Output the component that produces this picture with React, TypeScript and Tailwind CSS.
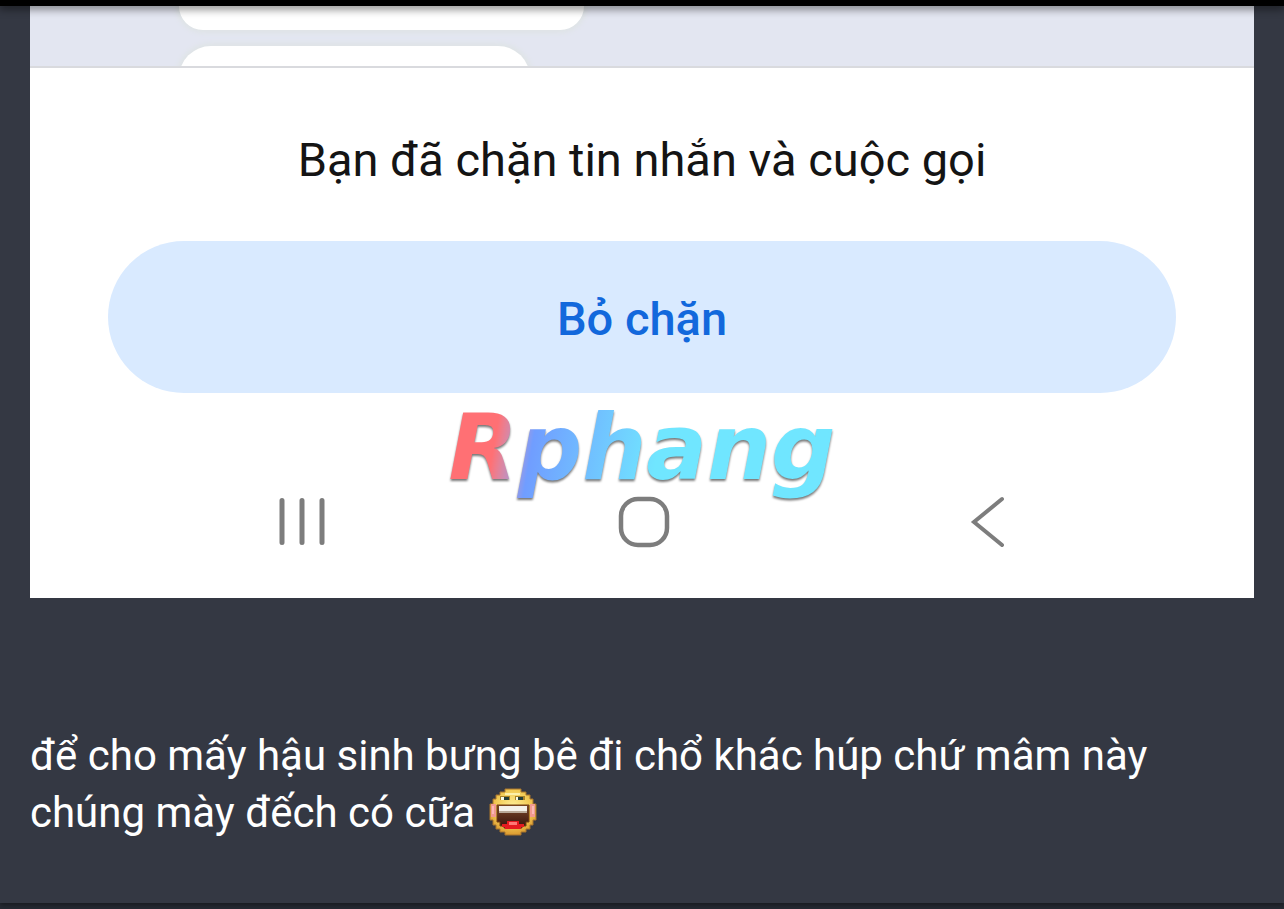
function ChatStrip() {
  return (
    <div className="flex h-[62px] flex-col gap-4 overflow-hidden border-b-2 border-[#d9dade] bg-[#e3e6f1] pl-[149px]">
      <div className="h-6 w-[405px] shrink-0 rounded-b-[26px] bg-white shadow-[0_0_5px_3px_#dfe4e6]" />
      <div className="h-14 w-[351px] shrink-0 rounded-t-[32px] bg-white shadow-[0_0_5px_3px_#dfe4e6]" />
    </div>
  );
}

function Watermark() {
  return (
    <span className="absolute left-1/2 top-[382px] -translate-x-1/2 bg-linear-100 from-[#ff7074] from-15% via-[#709dff] via-24% to-[#70e6ff] to-54% bg-clip-text px-2 font-['DejaVu_Sans',sans-serif] text-[90px] font-bold italic leading-[120px] text-transparent drop-shadow-[0_2px_1px_#777777]">
      Rphang
    </span>
  );
}

function SystemNav() {
  const button = "flex h-16 w-16 items-center justify-center text-[#7d7d7d]";
  return (
    <nav aria-label="System" className="mt-[97px] flex justify-center gap-[279px] pl-1">
      <button type="button" aria-label="Recent apps" className={button}>
        <svg viewBox="0 0 52 52" className="h-[52px] w-[52px]" fill="none" stroke="currentColor" strokeWidth="5" strokeLinecap="round">
          <path d="M7 4.500V46.500M27 4.500V46.500M47 4.500V46.500" />
        </svg>
      </button>
      <button type="button" aria-label="Home" className={button}>
        <svg viewBox="0 0 52 52" className="h-[52px] w-[52px]" fill="none" stroke="currentColor" strokeWidth="4.500">
          <rect x="3" y="3" width="46" height="46" rx="17" />
        </svg>
      </button>
      <button type="button" aria-label="Back" className={button}>
        <svg viewBox="0 0 52 52" className="h-[52px] w-[52px]" fill="none" stroke="currentColor" strokeWidth="4" strokeLinecap="round">
          <path d="M41 3 13 26l28 23" />
        </svg>
      </button>
    </nav>
  );
}

function LaughingFace() {
  return (
    <svg role="img" aria-label="laughing" viewBox="0 0 48 48" className="ml-[3px] inline-block h-12 w-12 align-[-9px]">
      <defs>
        <radialGradient id="face" cx="50%" cy="40%" r="62%">
          <stop offset="0" stopColor="#fff09a" />
          <stop offset="0.6" stopColor="#f2cb55" />
          <stop offset="1" stopColor="#d9952c" />
        </radialGradient>
        <linearGradient id="mouth" x1="0" x2="0" y1="0" y2="1">
          <stop offset="0" stopColor="#7c4a2c" />
          <stop offset="1" stopColor="#35100c" />
        </linearGradient>
      </defs>
      <path
        fill="url(#face)"
        stroke="#a8742c"
        strokeWidth="1"
        d="M16 1h16v3h5v3h4v4h3v5h3v16h-3v5h-3v4h-4v3h-5v3H16v-3h-5v-3H7v-4H4v-5H1V16h3v-5h3V7h4V4h5z"
      />
      <path fill="#fff8bd" d="M16 5h15v2H16z" opacity="0.800" />
      <path fill="#f29a91" d="M2 16h5v13H2zM41 16h5v13h-5z" />
      <path fill="#fbb9b6" d="M3 18h2v8H3zM43 18h2v8h-2z" />
      <path fill="#a98328" d="M11 8h10v4H11zM26 8h10v4H26z" />
      <path fill="#f9fbe8" d="M12 9h3v3h-3zM27 9h2v3h-2z" />
      <path fill="#243e38" d="M15 9h5v3h-5zM29 9h5v3h-5z" />
      <path fill="url(#mouth)" stroke="#764013" strokeWidth="1" d="M8 17h32v17h-3v4h-4v2H15v-2h-4v-4H8z" />
      <path fill="#f4f1ea" d="M10 18h28v5H10z" />
      <path fill="#b9a999" d="M10 23h28v2H10z" />
      <path fill="#e51a20" d="M13 36h5v-3h12v3h5v3h-3v2H16v-2h-3z" />
      <path fill="#ff7775" d="M20 34h8v3h-8z" />
    </svg>
  );
}

export default function App() {
  return (
    <div className="bg-[#262a33] font-[Roboto,sans-serif]">
      <div className="relative z-10 h-[6px] bg-black shadow-[0_2px_8px_1px_rgba(0,0,0,0.5)]" />
      <article className="bg-[#343843] px-[30px] pb-[62px] shadow-[0_2px_5px_rgba(0,0,0,0.4)]">
        <figure className="relative bg-white pb-11 text-center">
          <ChatStrip />
          <p className="pt-16 text-[47px] leading-[56px] text-[#141414]">Bạn đã chặn tin nhắn và cuộc gọi</p>
          <div className="mt-[53px] px-[78px]">
            <button type="button" className="h-[152px] w-full rounded-full bg-[#d9eaff] pt-1 text-[47px] font-medium text-[#1268dc]">
              Bỏ chặn
            </button>
          </div>
          <SystemNav />
          <Watermark />
        </figure>
        <p className="mt-[129px] text-[42px] leading-[57px] text-white">
          để cho mấy hậu sinh bưng bê đi chổ khác húp chứ mâm này chúng mày đếch có cữa <LaughingFace />
        </p>
      </article>
      <div className="h-[7px]" />
    </div>
  );
}
